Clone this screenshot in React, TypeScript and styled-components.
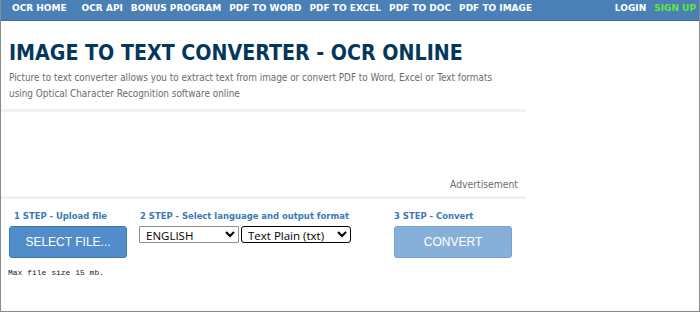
import styled, { createGlobalStyle } from 'styled-components'

const Global = createGlobalStyle`
  html, body { margin: 0; padding: 0; background: #fff; }
  body { font-family: "DejaVu Sans", Verdana, sans-serif; }
`

const Page = styled.div`
  width: 700px;
  height: 312px;
  box-sizing: border-box;
  border: 1px solid #8a8a8a;
  border-top: none;
  overflow: hidden;
`

const Nav = styled.nav`
  display: flex;
  align-items: flex-start;
  height: 21px;
  box-sizing: border-box;
  background: #4a80b6;
  border-bottom: 1px solid #3d6e9f;
  padding: 3px 0 0 12px;
  margin: 0 -1px;
`

const NavLink = styled.a<{ $green?: boolean }>`
  color: ${p => (p.$green ? '#66e63c' : '#fff')};
  font: bold 9px "DejaVu Sans", Verdana, sans-serif;
  text-decoration: none;
  margin-right: 8px;
  white-space: nowrap;
  &:first-child { margin-right: 15px; }
  &:last-child { margin-right: 4px; }
`

const NavGap = styled.div`
  flex: 1;
`

const Main = styled.main`
  width: 525px;
  font-family: "DejaVu Sans Condensed", "DejaVu Sans", sans-serif;
  font-stretch: condensed;
`

const Title = styled.h1`
  margin: 19px 0 0 8px;
  font-size: 21.2px;
  font-weight: bold;
  color: #04375c;
`

const Lead = styled.p`
  margin: 5px 0 7px 8px;
  max-width: 490px;
  font-size: 9.9px;
  line-height: 16px;
  color: #6b6b6b;
`

const Rule = styled.hr`
  border: none;
  height: 3px;
  background: #f1f1f1;
  margin: 0;
`

const AdBox = styled.div`
  height: 84px;
  display: flex;
  align-items: flex-end;
  justify-content: flex-end;
  padding: 0 8px 6px 0;
  box-sizing: border-box;
  font-size: 10.3px;
  color: #6b6b6b;
`

const Steps = styled.div`
  display: flex;
  padding: 11px 0 0 8px;
`

const Step = styled.div<{ $w: number }>`
  width: ${p => p.$w}px;
  display: flex;
  flex-direction: column;
`

const StepLabel = styled.div<{ $indent: number }>`
  font-size: 9.4px;
  font-weight: bold;
  color: #3a7ab8;
  padding-left: ${p => p.$indent}px;
  height: 13px;
  margin-bottom: 3px;
`

const Button = styled.button<{ $light?: boolean }>`
  width: 118px;
  height: 32px;
  box-sizing: border-box;
  background: ${p => (p.$light ? '#86afda' : '#518dca')};
  border: 1px solid ${p => (p.$light ? '#78a2cf' : '#3e78b5')};
  border-radius: 3px;
  color: #fff;
  font: 12px "Liberation Sans", Arial, sans-serif;
  padding: 0;
`

const Selects = styled.div`
  display: flex;
  gap: 2px;
`

const Select = styled.select<{ $w: number; $dark?: boolean }>`
  width: ${p => p.$w}px;
  height: 17px;
  box-sizing: border-box;
  font: 11.5px "Open Sans", "Noto Sans", sans-serif;
  border: 1px solid ${p => (p.$dark ? '#000' : '#8f8f8f')};
  border-radius: ${p => (p.$dark ? '3px' : '1px')};
  padding: 0 0 0 2px;
  background: #fff;
  color: #000;
`

const Note = styled.div`
  margin: 10px 0 0 7px;
  font: 8px "Liberation Mono", "Courier New", monospace;
  color: #222;
`

export default function App () {
  return (
    <Page>
      <Global />
      <Nav>
        <NavLink>OCR HOME</NavLink>
        <NavLink>OCR API</NavLink>
        <NavLink>BONUS PROGRAM</NavLink>
        <NavLink>PDF TO WORD</NavLink>
        <NavLink>PDF TO EXCEL</NavLink>
        <NavLink>PDF TO DOC</NavLink>
        <NavLink>PDF TO IMAGE</NavLink>
        <NavGap />
        <NavLink>LOGIN</NavLink>
        <NavLink $green>SIGN UP</NavLink>
      </Nav>
      <Main>
        <Title>IMAGE TO TEXT CONVERTER - OCR ONLINE</Title>
        <Lead>
          Picture to text converter allows you to extract text from image or convert PDF to Word, Excel or Text formats
          using Optical Character Recognition software online
        </Lead>
        <Rule />
        <AdBox>Advertisement</AdBox>
        <Rule />
        <Steps>
          <Step $w={130}>
            <StepLabel $indent={5}>1 STEP - Upload file</StepLabel>
            <Button>SELECT FILE...</Button>
          </Step>
          <Step $w={255}>
            <StepLabel $indent={1}>2 STEP - Select language and output format</StepLabel>
            <Selects>
              <Select $w={100} defaultValue="en">
                <option value="en">ENGLISH</option>
              </Select>
              <Select $w={110} $dark defaultValue="txt">
                <option value="txt">Text Plain (txt)</option>
              </Select>
            </Selects>
          </Step>
          <Step $w={130}>
            <StepLabel $indent={0}>3 STEP - Convert</StepLabel>
            <Button $light>CONVERT</Button>
          </Step>
        </Steps>
        <Note>Max file size 15 mb.</Note>
      </Main>
    </Page>
  )
}
